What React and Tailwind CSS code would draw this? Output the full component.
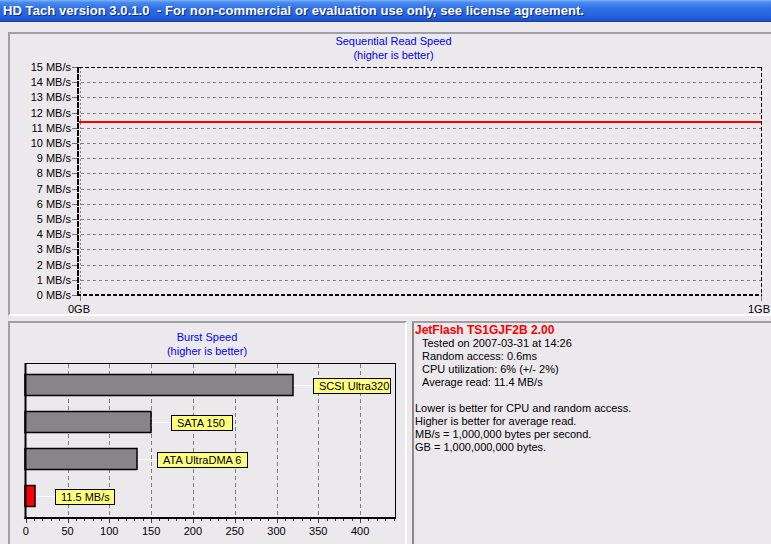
import React from "react";

const FONT = "Liberation Sans, Arial, sans-serif";

function SeqChart() {
  const y = (v) => 295 - v * 15.2;
  const vals = Array.from({ length: 16 }, (_, i) => i);
  return (
    <svg width="761" height="280" viewBox="10 34 761 280" className="block" fontFamily={FONT}>
      <text x="393.5" y="45" textAnchor="middle" fontSize="11" fill="#0000ff">Sequential Read Speed</text>
      <text x="393.5" y="59" textAnchor="middle" fontSize="11" fill="#0000ff">(higher is better)</text>
      {vals.map((v) => {
        const yy = Math.round(y(v)) + 0.5;
        return (
          <g key={v}>
            <text x="71" y={Math.round(y(v)) + 4} textAnchor="end" fontSize="11" fill="#000">{v} MB/s</text>
            <line x1="72" x2="78" y1={yy} y2={yy} stroke="#707070" />
            {v > 0 && v < 15 && (
              <line x1="81" x2="761" y1={yy} y2={yy} stroke="#808080" strokeDasharray="3 3" />
            )}
          </g>
        );
      })}
      <line x1="80.5" x2="80.5" y1="67" y2="295" stroke="#808080" strokeDasharray="2 2" />
      <line x1="79" x2="762" y1="67.5" y2="67.5" stroke="#000" strokeDasharray="4 2" />
      <line x1="761.5" x2="761.5" y1="67" y2="296" stroke="#000" strokeDasharray="4 2" />
      <line x1="78" x2="78" y1="67" y2="296" stroke="#000" strokeWidth="2" strokeDasharray="6 1" />
      <line x1="77" x2="762" y1="295" y2="295" stroke="#000" strokeWidth="2" strokeDasharray="4 2" />
      <line x1="79" x2="761" y1="122" y2="122" stroke="#ff0000" strokeWidth="2" />
      <line x1="80.5" x2="80.5" y1="296" y2="301" stroke="#808080" />
      <line x1="761.5" x2="761.5" y1="296" y2="301" stroke="#808080" />
      <text x="79" y="313" textAnchor="middle" fontSize="11" fill="#000">0GB</text>
      <text x="759" y="313" textAnchor="middle" fontSize="11" fill="#000">1GB</text>
    </svg>
  );
}

function BurstChart() {
  const bx = (v) => 25.7 + v * 0.836;
  const bars = [
    { v: 320, label: "SCSI Ultra320", top: 374, w: 77, fill: "#878587" },
    { v: 150, label: "SATA 150", top: 411, w: 61, fill: "#878587" },
    { v: 133, label: "ATA UltraDMA 6", top: 448, w: 90, fill: "#878587" },
    { v: 11.5, label: "11.5 MB/s", top: 485, w: 59, fill: "#ff0000" },
  ];
  const grid = [50, 100, 150, 200, 250, 300, 350, 400];
  const ticks = Array.from({ length: 45 }, (_, i) => i * 10);
  return (
    <svg width="395" height="221" viewBox="10 323 395 221" className="block" fontFamily={FONT}>
      <text x="207" y="341" textAnchor="middle" fontSize="11" fill="#0000ff">Burst Speed</text>
      <text x="207" y="355" textAnchor="middle" fontSize="11" fill="#0000ff">(higher is better)</text>
      {grid.map((v) => {
        const x = Math.round(bx(v)) + 0.5;
        return <line key={v} x1={x} x2={x} y1="364" y2="517" stroke="#808080" strokeDasharray="4 3" />;
      })}
      <rect x="25.5" y="363.5" width="370" height="154" fill="none" stroke="#000" />
      {bars.map((b) => {
        const end = Math.round(bx(b.v));
        const boxX = end + 20.5;
        const cy = b.top + 11;
        return (
          <g key={b.label}>
            <line x1={end} x2={boxX} y1={cy + 0.5} y2={cy + 0.5} stroke="#ffffff" />
            <rect x="25" y={b.top + 0.5} width={end - 25} height="21" fill={b.fill} stroke="#000" strokeWidth="1.5" />
            <rect x={boxX} y={b.top + 4.5} width={b.w} height="15" fill="#ffff80" stroke="#000" />
            <text x={boxX + 5.5} y={b.top + 15.5} fontSize="11" fill="#000">{b.label}</text>
          </g>
        );
      })}
      <line x1="25.5" x2="25.5" y1="363" y2="519" stroke="#000" strokeWidth="2" />
      <line x1="24.5" x2="396" y1="518" y2="518" stroke="#000" strokeWidth="2" />
      {ticks.map((v) => {
        const x = Math.round(bx(v)) + 0.5;
        return <line key={v} x1={x} x2={x} y1="519" y2={v % 50 === 0 ? 523 : 521} stroke="#404040" />;
      })}
      {[0, ...grid].map((v) => (
        <text key={v} x={bx(v)} y="535" textAnchor="middle" fontSize="11" fill="#000">{v}</text>
      ))}
    </svg>
  );
}

export default function App() {
  return (
    <div className="w-[771px] h-[544px] overflow-hidden bg-[#ece9ed] flex flex-col font-['Liberation_Sans',Arial,sans-serif]">
      <div className="h-[22px] shrink-0 bg-[linear-gradient(to_bottom,#7ab4fa_0%,#4a8af0_12%,#2f6fe4_40%,#2663dc_75%,#1d52c8_100%)] border-b border-[#1941a5] pl-[3px] text-white font-bold text-[13px] tracking-[0.07px] leading-[21px] whitespace-nowrap [text-shadow:1px_1px_0_#0a2a8a]">
        HD Tach version 3.0.1.0&nbsp;&nbsp;- For non-commercial or evaluation use only, see license agreement.
      </div>
      <div className="flex flex-col pl-[8px] pt-[10px]">
        <div className="w-[775px] h-[284px] shrink-0 border-2 border-t-[#a0a0a4] border-l-[#a0a0a4] border-b-white border-r-white">
          <SeqChart />
        </div>
        <div className="flex gap-[5px] mt-[5px]">
          <div className="w-[399px] h-[240px] shrink-0 border-2 border-t-[#a0a0a4] border-l-[#a0a0a4] border-b-white border-r-white">
            <BurstChart />
          </div>
          <div className="w-[370px] h-[240px] shrink-0 border-2 border-t-[#a0a0a4] border-l-[#8a8a8e] border-b-white border-r-white pl-[1px] pt-[1px] text-[11px] leading-[13px] text-black whitespace-nowrap">
            <div className="text-[#ff0000] font-bold text-[12px]">JetFlash TS1GJF2B 2.00</div>
            <div className="pl-[7px]">Tested on 2007-03-31 at 14:26</div>
            <div className="pl-[7px]">Random access: 0.6ms</div>
            <div className="pl-[7px]">CPU utilization: 6% (+/- 2%)</div>
            <div className="pl-[7px]">Average read: 11.4 MB/s</div>
            <div className="h-[13px]" />
            <div>Lower is better for CPU and random access.</div>
            <div>Higher is better for average read.</div>
            <div>MB/s = 1,000,000 bytes per second.</div>
            <div>GB = 1,000,000,000 bytes.</div>
          </div>
        </div>
      </div>
    </div>
  );
}
